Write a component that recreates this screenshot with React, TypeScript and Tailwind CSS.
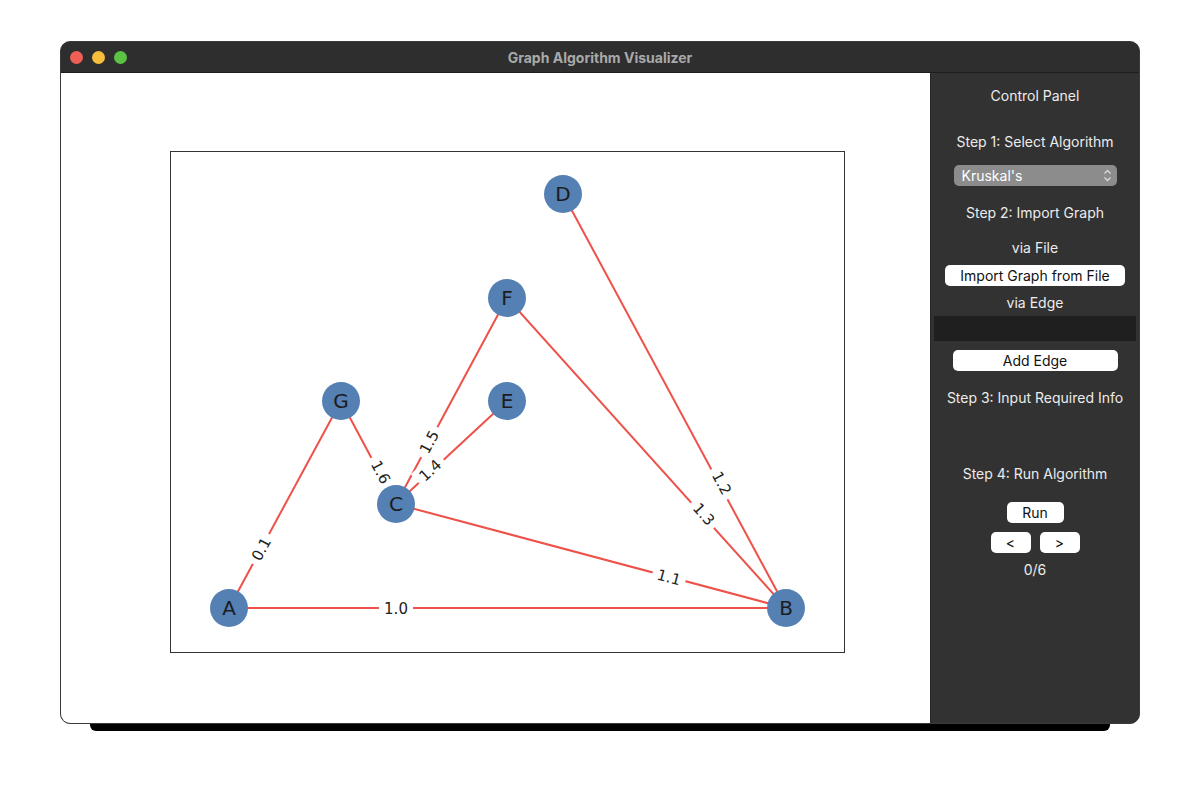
import type React from 'react'

type Node = { id: string; x: number; y: number }
type Edge = { a: string; b: string; w: string; lx: number; ly: number; rot: number }

// node centres, relative to the axes frame
const nodes: Node[] = [
	{ id: 'D', x: 392, y: 42 },
	{ id: 'F', x: 336, y: 146 },
	{ id: 'G', x: 170, y: 249 },
	{ id: 'E', x: 336, y: 249 },
	{ id: 'C', x: 225, y: 352 },
	{ id: 'A', x: 58, y: 456 },
	{ id: 'B', x: 615, y: 456 },
]

const edges: Edge[] = [
	{ a: 'A', b: 'B', w: '1.0', lx: 225, ly: 456, rot: 0 },
	{ a: 'A', b: 'G', w: '0.1', lx: 90, ly: 397, rot: -61.6 },
	{ a: 'G', b: 'C', w: '1.6', lx: 210, ly: 320, rot: 62 },
	{ a: 'C', b: 'F', w: '1.5', lx: 258, ly: 290, rot: -61.7 },
	{ a: 'C', b: 'E', w: '1.4', lx: 259, ly: 318, rot: -43 },
	{ a: 'C', b: 'B', w: '1.1', lx: 498, ly: 425, rot: 15 },
	{ a: 'F', b: 'B', w: '1.3', lx: 533, ly: 362, rot: 48 },
	{ a: 'D', b: 'B', w: '1.2', lx: 551, ly: 331, rot: 62 },
]

const byId = (id: string) => nodes.find((n) => n.id === id) as Node

const GraphPlot: React.FC = () => (
	<div className="w-[675px] h-[502px] border-[1.5px] border-[#333333] bg-white">
		<svg width="672" height="499" viewBox="0 0 672 499" className="block">
			{edges.map((e) => {
				const p = byId(e.a)
				const q = byId(e.b)
				return (
					<line
						key={`edge-${e.a}-${e.b}`}
						x1={p.x}
						y1={p.y}
						x2={q.x}
						y2={q.y}
						stroke="#ee5149"
						strokeWidth={2}
					/>
				)
			})}
			{edges.map((e) => (
				<g key={`label-${e.a}-${e.b}`} transform={`translate(${e.lx} ${e.ly}) rotate(${e.rot})`}>
					<rect x={-17} y={-10} width={34} height={20} fill="#ffffff" />
					<text
						x={0}
						y={5.5}
						textAnchor="middle"
						fontSize={15}
						fontFamily="'DejaVu Sans', sans-serif"
						fill="#222222"
					>
						{e.w}
					</text>
				</g>
			))}
			{nodes.map((n) => (
				<g key={`node-${n.id}`}>
					<circle cx={n.x} cy={n.y} r={19} fill="#5480b3" />
					<text
						x={n.x}
						y={n.y + 7}
						textAnchor="middle"
						fontSize={20}
						fontFamily="'DejaVu Sans', sans-serif"
						fill="#1c1c1c"
					>
						{n.id}
					</text>
				</g>
			))}
		</svg>
	</div>
)

const PanelButton: React.FC<{ label: string; className?: string }> = ({ label, className }) => (
	<button
		type="button"
		className={`h-[21px] rounded-[5px] bg-white text-[14px] leading-none text-[#111] flex items-center justify-center ${className ?? ''}`}
	>
		{label}
	</button>
)

const ControlPanel: React.FC = () => (
	<div className="w-[209px] shrink-0 bg-[#323232] border-l border-[#262626] flex flex-col items-center text-[14px] text-[#ececec] font-['Inter',sans-serif]">
		<div className="mt-[14px] h-[18px] leading-[18px]">Control Panel</div>
		<div className="mt-[28px] h-[18px] leading-[18px]">Step 1: Select Algorithm</div>

		{/* algorithm select */}
		<div className="mt-[14px] w-[163px] h-[21px] rounded-[5px] bg-[#8c8c8c] flex items-center justify-between pl-[8px] pr-[5px] text-white">
			<span className="leading-none">Kruskal's</span>
			<svg width="9" height="13" viewBox="0 0 9 13" fill="none" stroke="#d8d8d8" strokeWidth="1.4">
				<path d="M1.5 4.5 L4.5 1.5 L7.5 4.5" />
				<path d="M1.5 8.5 L4.5 11.5 L7.5 8.5" />
			</svg>
		</div>

		<div className="mt-[18px] h-[18px] leading-[18px]">Step 2: Import Graph</div>
		<div className="mt-[17px] h-[18px] leading-[18px]">via File</div>
		<PanelButton label="Import Graph from File" className="mt-[8px] w-[180px]" />
		<div className="mt-[8px] h-[18px] leading-[18px]">via Edge</div>
		<div className="mt-[4px] w-[202px] h-[25px] bg-[#1f1f1f]" />
		<PanelButton label="Add Edge" className="mt-[9px] w-[165px]" />
		<div className="mt-[18px] h-[18px] leading-[18px]">Step 3: Input Required Info</div>
		<div className="mt-[58px] h-[18px] leading-[18px]">Step 4: Run Algorithm</div>
		<PanelButton label="Run" className="mt-[19px] w-[57px]" />
		<div className="mt-[9px] flex gap-[9px]">
			<PanelButton label="<" className="w-[40px]" />
			<PanelButton label=">" className="w-[40px]" />
		</div>
		<div className="mt-[8px] h-[18px] leading-[18px]">0/6</div>
	</div>
)

export default function App() {
	return (
		<div className="w-[1200px] h-[804px] bg-white pt-[41px] pl-[60px]">
			<div className="w-[1080px]">
				<div className="w-[1080px] h-[683px] rounded-[10px] overflow-hidden border border-[#3a3a3a] flex flex-col bg-[#323232]">
					{/* title bar */}
					<div className="h-[31px] shrink-0 bg-[#2e2e2e] border-b border-[#1e1e1e] flex items-center relative">
						<div className="flex gap-[9px] pl-[9px]">
							<span className="w-[13px] h-[13px] rounded-full bg-[#ee5f56]" />
							<span className="w-[13px] h-[13px] rounded-full bg-[#f6be3b]" />
							<span className="w-[13px] h-[13px] rounded-full bg-[#5cc243]" />
						</div>
						<div className="flex-1 text-center pr-[66px] text-[14px] font-bold text-[#a9a9a9] font-['Inter',sans-serif]">
							Graph Algorithm Visualizer
						</div>
					</div>
					<div className="flex flex-1">
						<div className="flex-1 bg-white pt-[78px] pl-[109px]">
							<GraphPlot />
						</div>
						<ControlPanel />
					</div>
				</div>
				<div className="mx-[30px] h-[7px] bg-black rounded-b-[6px]" />
			</div>
		</div>
	)
}
